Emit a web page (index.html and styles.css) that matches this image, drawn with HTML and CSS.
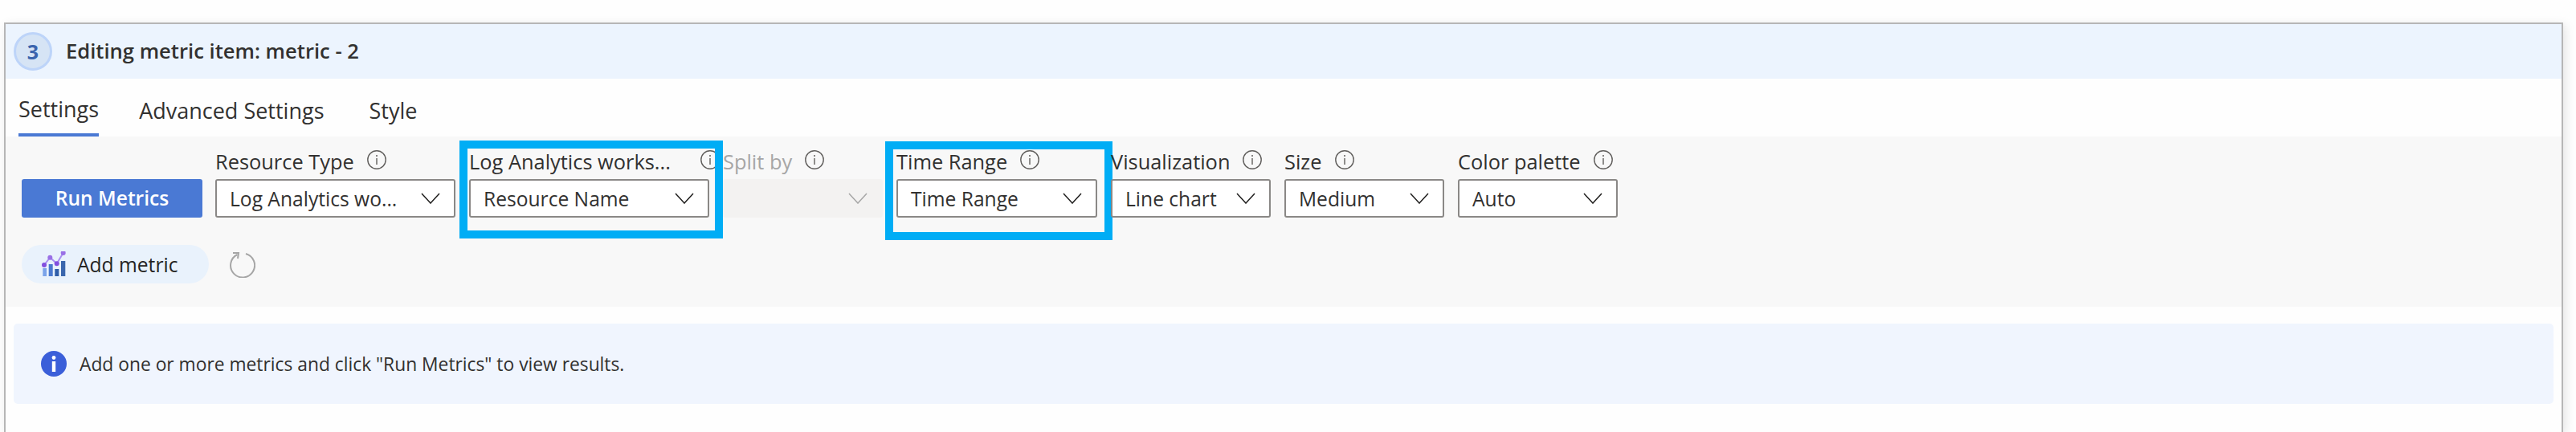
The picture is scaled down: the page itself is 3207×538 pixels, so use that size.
FILE: index.html
```html
<!DOCTYPE html>
<html lang="en">
<head>
    <meta charset="UTF-8">
    <title>Editing metric item</title>
    <link rel="stylesheet" href="styles.css">
</head>
<body>
    <svg class="defs" width="0" height="0">
        <symbol id="info" viewBox="0 0 24 24">
            <circle cx="12" cy="12" r="11.2" fill="none" stroke="#605e5c" stroke-width="1.4"/>
            <rect x="11.3" y="10" width="1.4" height="8" fill="#605e5c"/>
            <circle cx="12" cy="7" r="1" fill="#605e5c"/>
        </symbol>
        <symbol id="chevron" viewBox="0 0 24 14">
            <polyline points="1,1 12,13 23,1" fill="none" stroke="currentColor" stroke-width="1.5"/>
        </symbol>
    </svg>

    <div class="card">
        <div class="header">
            <span class="step">3</span>
            <h1>Editing metric item: metric - 2</h1>
        </div>

        <div class="tabs">
            <span class="tab active">Settings</span>
            <span class="tab">Advanced Settings</span>
            <span class="tab tab-last">Style</span>
        </div>

        <div class="toolbar">
            <div class="fields">
                <button class="run">Run Metrics</button>

                <div class="field w-wide">
                    <div class="label"><span>Resource Type</span><svg class="info"><use href="#info"/></svg></div>
                    <div class="select"><span>Log Analytics wo...</span><svg class="chevron"><use href="#chevron"/></svg></div>
                </div>

                <div class="field w-wide mark mark-a">
                    <div class="label"><span>Log Analytics works...</span><svg class="info push"><use href="#info"/></svg></div>
                    <div class="select"><span>Resource Name</span><svg class="chevron"><use href="#chevron"/></svg></div>
                </div>

                <div class="field w-small disabled">
                    <div class="label"><span>Split by</span><svg class="info"><use href="#info"/></svg></div>
                    <div class="select"><span></span><svg class="chevron"><use href="#chevron"/></svg></div>
                </div>

                <div class="field w-mid mark mark-b">
                    <div class="label"><span>Time Range</span><svg class="info"><use href="#info"/></svg></div>
                    <div class="select"><span>Time Range</span><svg class="chevron"><use href="#chevron"/></svg></div>
                </div>

                <div class="field w-small">
                    <div class="label"><span>Visualization</span><svg class="info"><use href="#info"/></svg></div>
                    <div class="select"><span>Line chart</span><svg class="chevron"><use href="#chevron"/></svg></div>
                </div>

                <div class="field w-small">
                    <div class="label"><span>Size</span><svg class="info"><use href="#info"/></svg></div>
                    <div class="select"><span>Medium</span><svg class="chevron"><use href="#chevron"/></svg></div>
                </div>

                <div class="field w-small">
                    <div class="label"><span>Color palette</span><svg class="info"><use href="#info"/></svg></div>
                    <div class="select"><span>Auto</span><svg class="chevron"><use href="#chevron"/></svg></div>
                </div>
            </div>

            <div class="actions">
                <button class="add">
                    <svg class="add-icon" viewBox="0 1 30 32">
                        <rect x="1.3" y="22" width="4.7" height="10" fill="#7ba4ea"/>
                        <rect x="8.7" y="17" width="5" height="15" fill="#4a79cf"/>
                        <rect x="16.3" y="23" width="5" height="9" fill="#2f5da8"/>
                        <rect x="24" y="13" width="5.3" height="19" fill="#3a66ad"/>
                        <polyline points="3,18 10.3,8.7 18.7,16.3 26.7,3" fill="none" stroke="#a98ff0" stroke-width="2"/>
                        <circle cx="3" cy="18" r="3" fill="#8250df"/>
                        <circle cx="10.3" cy="8.7" r="3" fill="#9a70e6"/>
                        <circle cx="18.7" cy="16.3" r="3" fill="#8250df"/>
                        <circle cx="26.7" cy="3" r="3" fill="#9a70e6"/>
                    </svg>
                    Add metric
                </button>
                <svg class="refresh" viewBox="0 0 32 32">
                    <path d="M20 2 A15 15 0 1 1 9.5 3" fill="none" stroke="#a6a6a6" stroke-width="2"/>
                    <polyline points="4,1 11,1 10,8" fill="none" stroke="#a6a6a6" stroke-width="2"/>
                </svg>
            </div>
        </div>

        <div class="message">
            <svg class="message-icon" viewBox="0 0 32 32">
                <circle cx="16" cy="16" r="16" fill="#3b5fd9"/>
                <circle cx="16" cy="8.5" r="2.4" fill="#fff"/>
                <rect x="13.8" y="13" width="4.4" height="13" fill="#fff"/>
            </svg>
            <span>Add one or more metrics and click "Run Metrics" to view results.</span>
        </div>
    </div>
</body>
</html>
```

FILE: styles.css
```css
html, body {
    height: 100%;
}
body {
    margin: 0;
    padding: 28px 16px 0 5px;
    box-sizing: border-box;
    background-color: #fefefe;
    font-family: "Open Sans", "Noto Sans", sans-serif;
    font-size: 25px;
    color: #323130;
    overflow: hidden;
}
.defs {
    position: absolute;
}
.card {
    height: 100%;
    box-sizing: border-box;
    border: 2px solid #b6b6b6;
    border-bottom: 0;
    background-color: #fefefe;
    box-shadow: 3px 3px 12px rgba(0, 0, 0, 0.1);
}
.header {
    display: flex;
    align-items: center;
    gap: 17px;
    height: 68px;
    padding-left: 10px;
    background-color: #ecf4fe;
}
.step {
    display: flex;
    align-items: center;
    justify-content: center;
    width: 48px;
    height: 48px;
    box-sizing: border-box;
    border: 3px solid #bdd4f9;
    border-radius: 50%;
    background-color: #d6e4f5;
    color: #3b64ad;
    font-weight: 700;
}
h1 {
    margin: 0 0 2px;
    font-size: 25.6px;
    font-weight: 600;
}
.tabs {
    display: flex;
    gap: 50px;
    height: 72px;
    padding-left: 16px;
    box-sizing: border-box;
}
.tab {
    display: flex;
    align-items: center;
    padding-top: 6px;
    font-size: 27px;
}
.tab-last {
    margin-left: 6px;
}
.tab.active {
    border-bottom: 4px solid #4a79d4;
    font-weight: 500;
}
.toolbar {
    padding: 16px 0 29px 20px;
    background-color: #f8f8f8;
}
.fields {
    display: flex;
    align-items: flex-end;
    gap: 17px;
}
.field {
    position: relative;
}
.w-wide {
    width: 299px;
}
.w-mid {
    width: 250px;
}
.w-small {
    width: 199px;
}
.label {
    display: flex;
    align-items: center;
    gap: 16px;
    height: 37px;
    padding-bottom: 8px;
    box-sizing: border-box;
    font-size: 25.4px;
    font-weight: 500;
    white-space: nowrap;
}
.info {
    width: 24px;
    height: 24px;
    flex: none;
    margin-top: -4px;
}
.info.push {
    margin-left: auto;
    margin-right: -13px;
}
.select {
    display: flex;
    align-items: center;
    justify-content: space-between;
    height: 48px;
    padding: 0 17px 0 16px;
    box-sizing: border-box;
    border: 2px solid #8a8886;
    border-radius: 3px;
    background-color: #fff;
    font-size: 24.6px;
}
.chevron {
    width: 24px;
    height: 14px;
    flex: none;
    color: #201f1e;
}
.disabled .label span {
    color: #a6a6a6;
}
.disabled .select {
    border-color: #f3f2f1;
    background-color: #f3f2f1;
}
.disabled .chevron {
    color: #a6a6a6;
}
.mark::after {
    content: "";
    position: absolute;
    border: 10px solid #00adf5;
    pointer-events: none;
}
.mark-a::after {
    top: -11px;
    right: -17px;
    bottom: -26px;
    left: -12px;
}
.mark-b::after {
    top: -10px;
    right: -19px;
    bottom: -28px;
    left: -14px;
}
.run {
    width: 225px;
    height: 48px;
    margin-right: -1px;
    padding-bottom: 3px;
    border: 0;
    border-radius: 3px;
    background-color: #4a79d4;
    color: #fff;
    font-family: inherit;
    font-size: 24.6px;
    font-weight: 600;
}
.actions {
    display: flex;
    align-items: center;
    gap: 26px;
    margin-top: 34px;
}
.add {
    display: flex;
    align-items: center;
    gap: 14px;
    width: 233px;
    height: 48px;
    padding: 0 0 0 25px;
    box-sizing: border-box;
    border: 0;
    border-radius: 24px;
    background-color: #e9f2fc;
    color: #252423;
    font-family: inherit;
    font-size: 24.6px;
}
.add-icon {
    width: 30px;
    height: 32px;
    flex: none;
}
.refresh {
    width: 32px;
    height: 32px;
    margin-top: 2px;
}
.message {
    display: flex;
    align-items: center;
    gap: 16px;
    height: 100px;
    margin: 21px 10px 0 10px;
    padding-left: 34px;
    box-sizing: border-box;
    border-radius: 5px;
    background-color: #f0f5fe;
    font-size: 22.8px;
}
.message-icon {
    width: 32px;
    height: 32px;
    flex: none;
}
```
